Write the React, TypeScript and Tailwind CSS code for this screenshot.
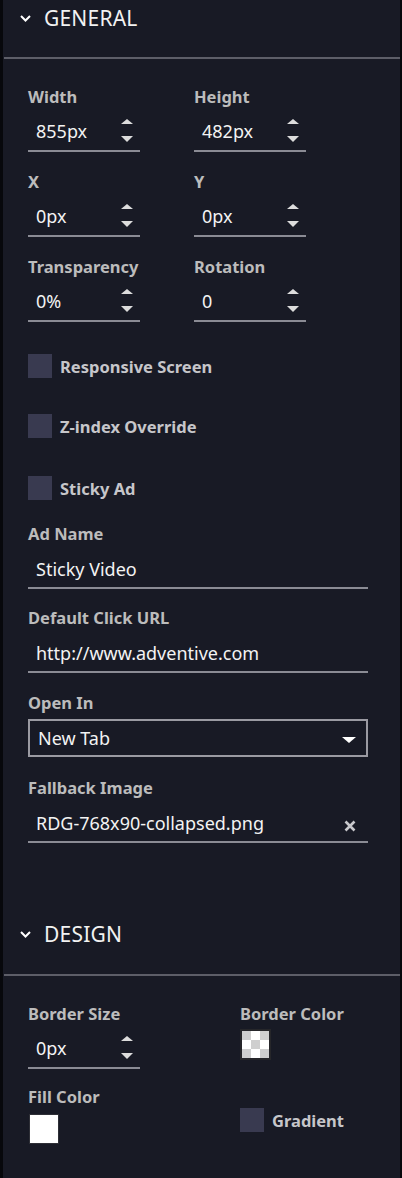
import React from "react";

function Chevron() {
  return (
    <svg width="11" height="7" viewBox="0 0 11 7" className="shrink-0">
      <path d="M1 1l4.5 4.5L10 1" stroke="#ffffff" strokeWidth="2" fill="none" />
    </svg>
  );
}

function Spinner() {
  return (
    <svg width="12" height="23" viewBox="0 0 12 23" className="shrink-0">
      <polygon points="0,5 6,0 12,5" fill="#dcdcdc" />
      <polygon points="0,17 12,17 6,23" fill="#dcdcdc" />
    </svg>
  );
}

function Label({ children }: { children: React.ReactNode }) {
  return (
    <div className="h-5 text-[16.5px] font-bold leading-5 whitespace-nowrap text-[#bcbcbc]">
      {children}
    </div>
  );
}

function NumField({ label, value }: { label: string; value: string }) {
  return (
    <div className="w-[112px]">
      <Label>{label}</Label>
      <div className="mt-3 flex h-[33px] items-start justify-between border-b-2 border-[#8a8b94] pl-2 pr-[7px]">
        <span className="text-[18px] leading-6 text-[#f3f3f3]">{value}</span>
        <Spinner />
      </div>
    </div>
  );
}

function TextField({ label, value, clear }: { label: string; value: string; clear?: boolean }) {
  return (
    <div className="w-[340px]">
      <Label>{label}</Label>
      <div className="mt-3 flex h-[33px] items-start justify-between border-b-2 border-[#8a8b94] pl-2 pr-3">
        <span className="pt-[1px] text-[18px] leading-6 text-[#f3f3f3]">{value}</span>
        {clear && (
          <svg width="12" height="12" viewBox="0 0 12 12" className="mt-[10px] shrink-0">
            <path d="M1.5 1.5l9 9M10.5 1.5l-9 9" stroke="#c8c8cc" strokeWidth="2.6" />
          </svg>
        )}
      </div>
    </div>
  );
}

function Check({ label }: { label: string }) {
  return (
    <div className="flex items-center gap-2">
      <div className="h-6 w-6 shrink-0 bg-[#393a50]" />
      <span className="pt-[2px] text-[16.5px] font-bold leading-5 text-[#c6c6ca]">{label}</span>
    </div>
  );
}

function Header({ title, height }: { title: string; height: string }) {
  return (
    <div className={height}>
      <div className="flex h-9 items-center gap-[13px] pl-4">
        <Chevron />
        <span className="text-[21px] leading-9 tracking-[0.2px] text-[#f2f2f2]">{title}</span>
      </div>
    </div>
  );
}

export default function App() {
  return (
    <div className="min-h-[1178px] w-[402px] border-l-[3px] border-r-2 border-[#07080c] bg-[#181a25] font-['Noto_Sans','Open_Sans',sans-serif]">
      <div className="pl-[1px]">
        <Header title="GENERAL" height="h-[57px]" />
        <div className="h-[2px] bg-[#5d5e68]" />
      </div>

      <div className="pl-[25px] pt-[28px]">
        <div className="grid grid-cols-[112px_112px] gap-x-[54px] gap-y-5">
          <NumField label="Width" value="855px" />
          <NumField label="Height" value="482px" />
          <NumField label="X" value="0px" />
          <NumField label="Y" value="0px" />
          <NumField label="Transparency" value="0%" />
          <NumField label="Rotation" value="0" />
        </div>

        <div className="mt-[32px]">
          <Check label="Responsive Screen" />
        </div>
        <div className="mt-9">
          <Check label="Z-index Override" />
        </div>
        <div className="mt-[38px]">
          <Check label="Sticky Ad" />
        </div>

        <div className="mt-[24px]">
          <TextField label="Ad Name" value="Sticky Video" />
        </div>
        <div className="mt-[19px]">
          <TextField label="Default Click URL" value="http://www.adventive.com" />
        </div>
        <div className="mt-[20px] w-[340px]">
          <Label>Open In</Label>
          <div className="mt-[6px] flex h-[38px] items-center justify-between border-2 border-[#9a9aa2] pl-2 pr-[10px]">
            <span className="text-[18px] leading-6 text-[#f3f3f3]">New Tab</span>
            <svg width="14" height="6" viewBox="0 0 14 6" className="mt-[3px]">
              <polygon points="0,0 14,0 7,6" fill="#ffffff" />
            </svg>
          </div>
        </div>
        <div className="mt-[21px]">
          <TextField label="Fallback Image" value="RDG-768x90-collapsed.png" clear />
        </div>
      </div>

      <div className="mt-[73px] pl-[1px]">
        <Header title="DESIGN" height="h-[58px]" />
        <div className="h-[2px] bg-[#5d5e68]" />
      </div>

      <div className="pl-[25px] pt-[28px]">
        <div className="grid grid-cols-[112px_1fr] gap-x-[100px] gap-y-[18px]">
          <NumField label="Border Size" value="0px" />
          <div>
            <Label>Border Color</Label>
            <div className="mt-[5px] h-[31px] w-[31px] border-2 border-[#26262a]">
              <div className="grid h-full w-full grid-cols-3 grid-rows-3">
                <div className="bg-[#cfcfcf]" />
                <div className="bg-white" />
                <div className="bg-[#cfcfcf]" />
                <div className="bg-white" />
                <div className="bg-[#cfcfcf]" />
                <div className="bg-white" />
                <div className="bg-[#cfcfcf]" />
                <div className="bg-white" />
                <div className="bg-[#cfcfcf]" />
              </div>
            </div>
          </div>
          <div>
            <Label>Fill Color</Label>
            <div className="ml-[1px] mt-[7px] h-[30px] w-[30px] border border-[#2e2f36] bg-white" />
          </div>
          <div className="pt-[21px]">
            <Check label="Gradient" />
          </div>
        </div>
      </div>
    </div>
  );
}
